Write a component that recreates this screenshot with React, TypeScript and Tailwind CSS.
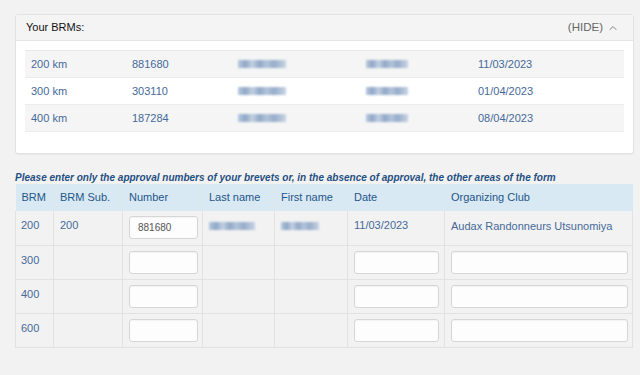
import { ChevronUp } from 'lucide-react'

const brms = [
  { km: '200 km', num: '881680', date: '11/03/2023' },
  { km: '300 km', num: '303110', date: '01/04/2023' },
  { km: '400 km', num: '187284', date: '08/04/2023' },
]

const Blur = ({ w }: { w: number }) => (
  <div className="flex h-[11px] items-center blur-[1px]" style={{ width: w }}>
    <div className="h-[8px] w-full bg-[linear-gradient(90deg,#b9c9de_0%,#8fa7c6_15%,#c3d0e1_30%,#90a8c7_45%,#b3c4da_60%,#97adca_75%,#c8d4e4_100%)]" />
  </div>
)

const Field = ({ w, value }: { w: string; value?: string }) => (
  <div
    className={`${w} flex h-[23px] items-center rounded-[3px] border border-[#d6d6d6] bg-[#fdfdfd] px-[8px] text-[10px] text-[#555] shadow-[inset_0_1px_1px_rgba(0,0,0,0.04)]`}
  >
    {value}
  </div>
)

const rows = [
  { brm: '200', sub: '200', filled: true },
  { brm: '300', sub: '', filled: false },
  { brm: '400', sub: '', filled: false },
  { brm: '600', sub: '', filled: false },
]

export default function App() {
  return (
    <div className="min-h-[375px] w-[640px] bg-[#f2f2f2] pt-[14px] font-['Liberation_Sans',sans-serif] text-[11px]">
      {/* Your BRMs card */}
      <div className="ml-[15px] w-[619px] rounded-[3px] border border-[#e2e2e2] bg-white shadow-[0_1px_1px_rgba(0,0,0,0.04)]">
        <div className="flex h-[26px] items-center justify-between border-b border-[#e6e6e6] bg-[#f4f4f4] pl-[10px] pr-[14px]">
          <span className="text-[11px] text-[#111]">Your BRMs:</span>
          <span className="flex items-center gap-[4px] text-[11.5px] text-[#666]">
            (HIDE)
            <ChevronUp size={12} strokeWidth={1.6} />
          </span>
        </div>
        <div className="px-[9px] pb-[21px] pt-[9px]">
          <div className="border-t border-[#e8e8e8]">
            {brms.map((b, i) => (
              <div
                key={b.km}
                className={`flex h-[27px] items-center border-b border-[#ececec] text-[#46699a] ${
                  i % 2 === 0 ? 'bg-[#f5f5f5]' : 'bg-white'
                }`}
              >
                <div className="w-[107px] pl-[6px]">{b.km}</div>
                <div className="w-[106px]">{b.num}</div>
                <div className="w-[128px]">
                  <Blur w={48} />
                </div>
                <div className="w-[112px]">
                  <Blur w={42} />
                </div>
                <div>{b.date}</div>
              </div>
            ))}
          </div>
        </div>
      </div>

      <p className="ml-[15px] mt-[17px] text-[10px] font-bold italic leading-[13px] text-[#1f4f82]">
        Please enter only the approval numbers of your brevets or, in the absence of approval, the other areas of the form
      </p>

      {/* Form table */}
      <table className="ml-[15px] w-[618px] table-fixed border-collapse text-left text-[11px]">
        <colgroup>
          <col className="w-[38px]" />
          <col className="w-[69px]" />
          <col className="w-[80px]" />
          <col className="w-[72px]" />
          <col className="w-[73px]" />
          <col className="w-[97px]" />
          <col />
        </colgroup>
        <thead>
          <tr className="h-[27px] bg-[#d9e9f3] text-[#24568a]">
            <th className="border-r border-[#e0e6ea] pl-[6px] font-normal">BRM</th>
            <th className="border-r border-[#e0e6ea] pl-[6px] font-normal">BRM Sub.</th>
            <th className="border-r border-[#e0e6ea] pl-[6px] font-normal">Number</th>
            <th className="border-r border-[#e0e6ea] pl-[6px] font-normal">Last name</th>
            <th className="border-r border-[#e0e6ea] pl-[6px] font-normal">First name</th>
            <th className="border-r border-[#e0e6ea] pl-[6px] font-normal">Date</th>
            <th className="pl-[6px] font-normal">Organizing Club</th>
          </tr>
        </thead>
        <tbody className="text-[#46699a]">
          {rows.map((r) => (
            <tr key={r.brm} className="border-b border-[#e2e2e2] bg-[#f2f2f2]">
              <td className="h-[34px] border-l border-r border-[#e2e2e2] px-[5px] pt-[6px] align-top">{r.brm}</td>
              <td className="border-r border-[#e2e2e2] px-[6px] pt-[6px] align-top">{r.sub}</td>
              <td className="border-r border-[#e2e2e2] px-[6px] pt-[5px] pb-[5px] align-top">
                <Field w="w-[69px]" value={r.filled ? '881680' : undefined} />
              </td>
              <td className="border-r border-[#e2e2e2] px-[6px] pt-[9px] align-top">
                {r.filled && <Blur w={46} />}
              </td>
              <td className="border-r border-[#e2e2e2] px-[6px] pt-[9px] align-top">
                {r.filled && <Blur w={38} />}
              </td>
              <td className="border-r border-[#e2e2e2] px-[6px] pt-[5px] pb-[5px] align-top">
                {r.filled ? <div className="pt-[1px]">11/03/2023</div> : <Field w="w-[85px]" />}
              </td>
              <td className="border-r border-[#e2e2e2] px-[6px] pt-[5px] pb-[5px] align-top">
                {r.filled ? (
                  <div className="pt-[2px]">Audax Randonneurs Utsunomiya</div>
                ) : (
                  <Field w="w-[177px]" />
                )}
              </td>
            </tr>
          ))}
        </tbody>
      </table>
    </div>
  )
}
